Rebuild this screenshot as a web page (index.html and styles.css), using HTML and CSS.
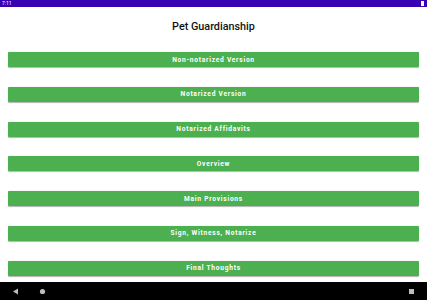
FILE: index.html
```html
<!DOCTYPE html>
<html lang="en">

<head>
    <meta charset="utf8">
    <title>Pet Guardianship</title>
    <link rel="stylesheet" href="styles.css">
</head>

<body>
    <div class="status-bar">
        <span class="clock">7:11</span>
        <span class="battery"></span>
    </div>

    <div class="screen">
        <h1 class="title">Pet Guardianship</h1>
        <div class="menu">
            <button class="menu-button">Non-notarized Version</button>
            <button class="menu-button">Notarized Version</button>
            <button class="menu-button">Notarized Affidavits</button>
            <button class="menu-button">Overview</button>
            <button class="menu-button">Main Provisions</button>
            <button class="menu-button">Sign, Witness, Notarize</button>
            <button class="menu-button">Final Thoughts</button>
        </div>
    </div>

    <div class="nav-bar">
        <div class="nav-left">
            <svg width="7" height="7" viewBox="0 0 7 7">
                <polygon points="6,0.5 6,6.5 1,3.5" fill="#bdbdbd"/>
            </svg>
            <svg width="7" height="7" viewBox="0 0 7 7">
                <circle cx="3.5" cy="3.5" r="2.6" fill="#bdbdbd"/>
            </svg>
        </div>
        <svg width="7" height="7" viewBox="0 0 7 7">
            <rect x="1" y="1" width="5" height="5" fill="#bdbdbd"/>
        </svg>
    </div>
</body>

</html>
```

FILE: styles.css
```css
* {
    box-sizing: border-box;
}

body {
    margin: 0;
    width: 427px;
    height: 300px;
    display: flex;
    flex-direction: column;
    background-color: white;
    font-family: Roboto, "Liberation Sans", sans-serif;
    overflow: hidden;
}

.status-bar {
    height: 7px;
    background-color: #3700b3;
    display: flex;
    justify-content: space-between;
    align-items: center;
    padding: 0 3px 0 2px;
}

.status-bar .clock {
    color: white;
    font-size: 5px;
    line-height: 7px;
}

.status-bar .battery {
    width: 3px;
    height: 5px;
    background-color: white;
}

.screen {
    flex-grow: 1;
    display: flex;
    flex-direction: column;
}

.title {
    margin: 0;
    height: 45px;
    display: flex;
    justify-content: center;
    align-items: center;
    padding-bottom: 7px;
    font-size: 10.8px;
    font-weight: 500;
    color: #111;
}

.menu {
    display: flex;
    flex-direction: column;
    row-gap: 19.8px;
    padding: 0 8px;
}

.menu-button {
    height: 15px;
    border: 0 none;
    border-radius: 1px;
    background-color: #4caf50;
    box-shadow: 0 0.5px 1px rgb(0 0 0 / 30%);
    color: white;
    font-family: Roboto, "Liberation Sans", sans-serif;
    font-size: 6.6px;
    font-weight: 700;
    letter-spacing: 0.75px;
    padding: 0;
    cursor: pointer;
}

.nav-bar {
    height: 18px;
    background-color: black;
    display: flex;
    justify-content: space-between;
    align-items: center;
    padding: 0 12px 0 12px;
}

.nav-bar .nav-left {
    display: flex;
    column-gap: 20px;
}
```
